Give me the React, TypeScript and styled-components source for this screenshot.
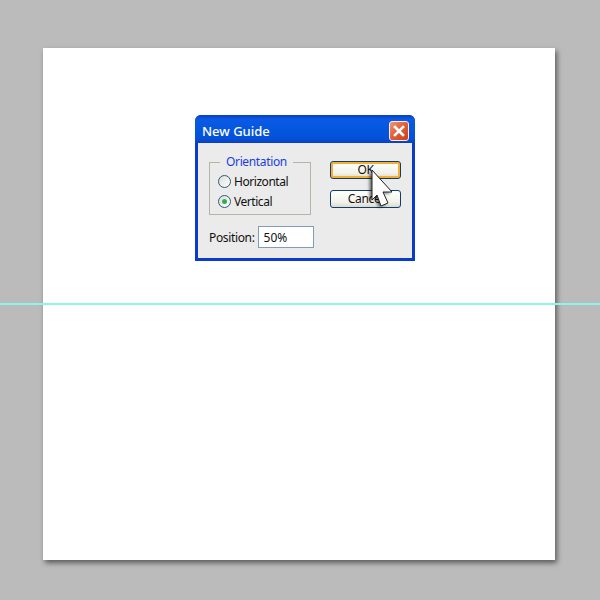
import React from 'react';
import styled, { createGlobalStyle } from 'styled-components';

const GlobalStyle = createGlobalStyle`
  html, body {
    margin: 0;
    padding: 0;
    background-color: #bbbbbb;
  }
`;

const Workspace = styled.div`
  position: relative;
  box-sizing: border-box;
  width: 600px;
  height: 600px;
  padding: 48px 45px 40px 43px;
  background-color: #bbbbbb;
  overflow: hidden;
  font-family: 'Noto Sans', 'Liberation Sans', sans-serif;
`;

const Canvas = styled.div`
  width: 512px;
  height: 512px;
  background-color: #ffffff;
  box-shadow: 2px 3px 5px rgba(0, 0, 0, 0.5);
  padding: 67px 0 0 152px;
  box-sizing: border-box;
`;

const Guide = styled.div`
  position: absolute;
  left: 0;
  right: 0;
  top: 303px;
  height: 2px;
  background-color: #8af5ea;
`;

const Dialog = styled.div`
  position: relative;
  box-sizing: border-box;
  width: 220px;
  height: 146px;
  display: flex;
  flex-direction: column;
  background-color: #0a3ccb;
  border-radius: 6px 6px 0 0;
  padding: 0 3px 3px;
`;

const TitleBar = styled.div`
  box-sizing: border-box;
  height: 28px;
  margin: 0 -3px;
  padding: 4px 6px 0 7px;
  display: flex;
  align-items: center;
  justify-content: space-between;
  flex-shrink: 0;
  border-radius: 6px 6px 0 0;
  background: linear-gradient(to bottom, #0a3cc4 0%, #0a5ae4 15%, #0556de 55%, #0550d8 85%, #0a40c0 100%);
`;

const Title = styled.span`
  color: #ffffff;
  font-size: 13px;
  font-weight: 500;
`;

const CloseButton = styled.div`
  box-sizing: border-box;
  width: 20px;
  height: 20px;
  display: flex;
  align-items: center;
  justify-content: center;
  border: 1px solid #f4f0ee;
  border-radius: 3px;
  background: linear-gradient(135deg, #f09878 0%, #e4603a 45%, #cc4018 100%);
`;

const Body = styled.div`
  flex: 1;
  display: flex;
  flex-direction: column;
  gap: 11px;
  padding: 12px 11px 0 11px;
  background-color: #ebebeb;
`;

const TopRow = styled.div`
  display: flex;
  gap: 19px;
`;

const Group = styled.fieldset`
  box-sizing: border-box;
  width: 102px;
  height: 60px;
  margin: 0;
  padding: 3px 0 0 8px;
  display: flex;
  flex-direction: column;
  gap: 1px;
  border: 1px solid #b4b4a8;
`;

const GroupLabel = styled.legend`
  margin-left: 2px;
  padding: 0 6px;
  color: #1a3fe0;
  font-size: 12px;
  letter-spacing: -0.35px;
  line-height: 14px;
`;

const RadioRow = styled.div`
  display: flex;
  align-items: center;
  gap: 3px;
  height: 19px;
  color: #111111;
  font-size: 12px;
  letter-spacing: -0.45px;
`;

const RadioCircle = styled.span`
  box-sizing: border-box;
  width: 13px;
  height: 13px;
  border-radius: 50%;
  border: 1px solid #2b5a80;
  background: linear-gradient(135deg, #dcdcd6, #ffffff);
  display: flex;
  align-items: center;
  justify-content: center;
`;

const RadioDot = styled.span`
  width: 5px;
  height: 5px;
  border-radius: 50%;
  background-color: #2fb14a;
`;

const ButtonColumn = styled.div`
  display: flex;
  flex-direction: column;
  gap: 11px;
  padding-top: 6px;
`;

const Button = styled.button<{ $focused?: boolean }>`
  box-sizing: border-box;
  width: 71px;
  height: 18px;
  padding: 0;
  border: 1px solid #0f3d6c;
  border-radius: 3px;
  background: linear-gradient(to bottom, #ffffff, #f2f2ea 70%, #dcd8ce);
  box-shadow: ${({ $focused }) => ($focused ? 'inset 0 0 0 2px #f4b030' : 'none')};
  color: #111111;
  font-family: inherit;
  font-size: 12px;
  letter-spacing: -0.3px;
  line-height: 16px;
`;

const PositionRow = styled.div`
  display: flex;
  align-items: center;
  gap: 3px;
  color: #111111;
  font-size: 12px;
  letter-spacing: -0.35px;
`;

const PositionInput = styled.input`
  box-sizing: border-box;
  width: 56px;
  height: 22px;
  padding: 0 5px;
  border: 1px solid #7f9db9;
  background-color: #ffffff;
  color: #111111;
  font-family: inherit;
  font-size: 12px;
`;

const Pointer = styled.svg`
  position: absolute;
  left: 174px;
  top: 54px;
  filter: drop-shadow(-2px 1px 1.5px rgba(0, 0, 0, 0.55));
`;

export default function App() {
  return (
    <Workspace>
      <GlobalStyle />
      <Canvas>
        <Dialog>
          <TitleBar>
            <Title>New Guide</Title>
            <CloseButton>
              <svg width="12" height="12" viewBox="0 0 12 12">
                <path d="M2 2 L10 10 M10 2 L2 10" stroke="#ffffff" strokeWidth="2.6" strokeLinecap="square" />
              </svg>
            </CloseButton>
          </TitleBar>
          <Body>
            <TopRow>
              <Group>
                <GroupLabel>Orientation</GroupLabel>
                <RadioRow>
                  <RadioCircle />
                  Horizontal
                </RadioRow>
                <RadioRow>
                  <RadioCircle>
                    <RadioDot />
                  </RadioCircle>
                  Vertical
                </RadioRow>
              </Group>
              <ButtonColumn>
                <Button $focused>OK</Button>
                <Button>Cancel</Button>
              </ButtonColumn>
            </TopRow>
            <PositionRow>
              Position:
              <PositionInput defaultValue="50%" />
            </PositionRow>
          </Body>
          <Pointer width="26" height="40" viewBox="0 0 26 40">
            <path
              d="M3 1 L23 23 L14 23 L19 34 L12 37 L8 26 L3 31 Z"
              fill="#ffffff"
              stroke="#222222"
              strokeWidth="1"
              strokeLinejoin="round"
            />
          </Pointer>
        </Dialog>
      </Canvas>
      <Guide />
    </Workspace>
  );
}
